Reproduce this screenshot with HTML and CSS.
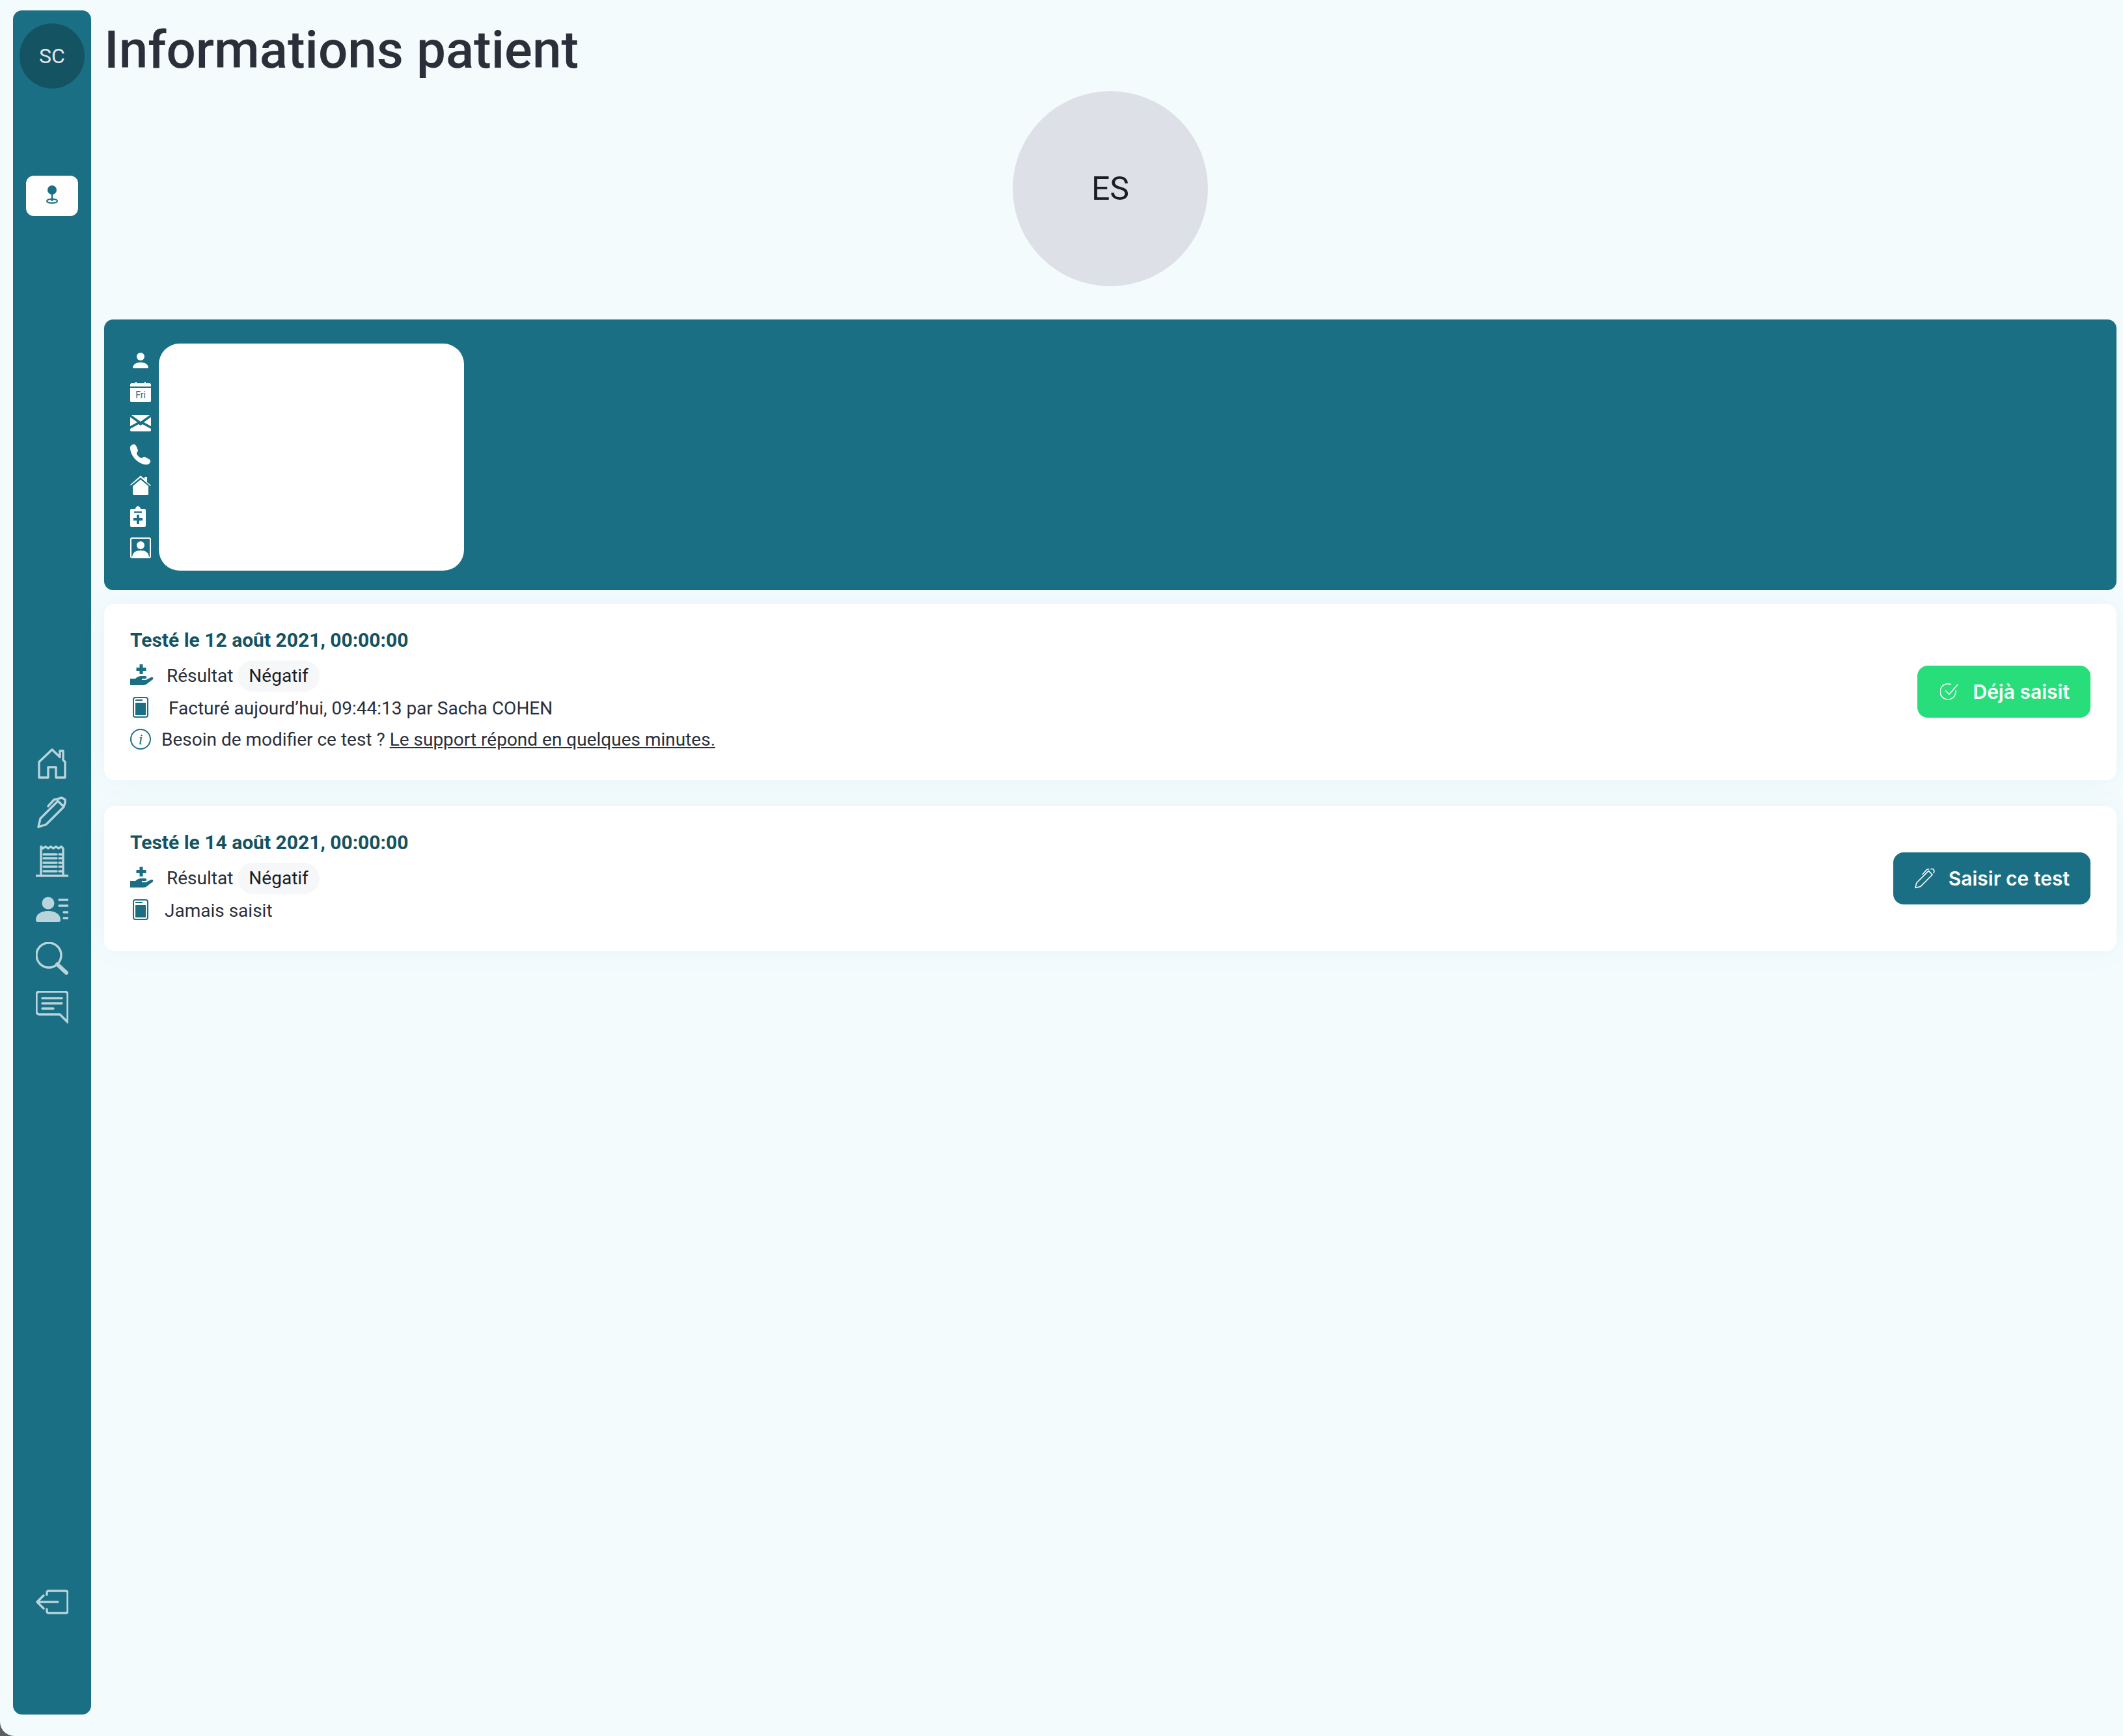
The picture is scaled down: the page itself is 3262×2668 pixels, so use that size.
FILE: index.html
```html
<!DOCTYPE html>
<html lang="fr">
  <head>
    <meta charset="UTF-8" />
    <title>Informations patient</title>
    <link rel="stylesheet" href="styles.css">
  </head>
  <body>
    <aside class="sidebar">
      <div class="user-avatar">SC</div>
      <a class="pin-btn">
        <svg width="20" height="30" viewBox="0 0 20 30"><circle cx="10" cy="8" r="7" fill="#1a6f84"/><path d="M10 14v11" stroke="#1a6f84" stroke-width="2.4"/><ellipse cx="10" cy="25" rx="8" ry="3" fill="none" stroke="#1a6f84" stroke-width="2"/></svg>
      </a>
      <nav class="side-nav">
        <svg class="nav-icon" viewBox="0 0 50 50"><path d="M5 47V23L25 4l12 11.500V6h5v14l3 3v24H31V31H19v16z"/></svg>
        <svg class="nav-icon" viewBox="0 0 50 50"><path d="M4 48l3-13L34 8l9 9-27 27zM19 16l9-10 6-1M36 4l4-1 5 3v5l-2 5"/></svg>
        <svg class="nav-icon" viewBox="0 0 50 50"><path d="M8 48V3l3 3 4-3 4 3 4-3 4 3 4-3 4 3 4-3 3 3v42M1 48h49M12 15h20M12 21h20M12 28h20M12 34h20M12 41h20M36 15h5M36 21h5M36 28h5M36 34h5M36 41h5"/></svg>
        <svg class="nav-icon" viewBox="0 0 50 42"><circle cx="19" cy="11" r="9.500" class="solid"/><path class="solid" d="M0 37c0-9 8-14 19-14s19 5 19 14c0 2-1 3-3 3H3c-2 0-3-1-3-3z"/><path d="M36 6h13M36 15h13M43 25h6M43 34h6"/></svg>
        <svg class="nav-icon" viewBox="0 0 50 50"><circle cx="20" cy="20" r="19"/><path d="M33 34l14 13" class="thick"/></svg>
        <svg class="nav-icon" viewBox="0 0 50 50"><path d="M5 1h40c2 0 4 2 4 4v43L37 36H5c-2 0-4-2-4-4V5c0-2 2-4 4-4zM10 11h30M10 19h30M10 27h17"/></svg>
      </nav>
      <a class="logout">
        <svg class="nav-icon" viewBox="0 0 50 38"><path d="M17 8V5c0-2 1-3 3-3h26c2 0 3 1 3 3v28c0 2-1 3-3 3H20c-2 0-3-1-3-3v-3M34 19H2M12 9L2 19l10 10"/></svg>
      </a>
    </aside>

    <main class="content">
      <h1>Informations patient</h1>
      <div class="patient-avatar">ES</div>

      <section class="patient-panel">
        <div class="info-icons">
          <svg width="34" height="32" viewBox="0 0 34 32"><circle cx="17" cy="10" r="6" fill="#fff"/><path d="M5 28c0-6 5-9 12-9s12 3 12 9z" fill="#fff"/></svg>
          <svg width="34" height="32" viewBox="0 0 34 32"><path d="M3 3h6V1h2v2h12V1h2v2h6c1 0 2 1 2 2v3H1V5c0-1 1-2 2-2zM1 10h32v20c0 1-1 2-2 2H3c-1 0-2-1-2-2z" fill="#fff"/><text x="17" y="26" class="cal-text">Fri</text></svg>
          <svg width="34" height="32" viewBox="0 0 34 32"><path d="M3 4h28l-14 10zM1 7l11 8L1 21zM33 7L22 15l11 6zM1 25l13-7 3 2 3-2 13 7v2c0 1-1 2-2 2H3c-1 0-2-1-2-2z" fill="#fff"/></svg>
          <svg width="34" height="32" viewBox="0 0 34 32"><path d="M1 6c0-3 3-5 6-5 2 0 3 2 4 4l2 5c0 2-2 3-2 5 1 3 4 6 7 7 2 0 3-2 5-2l6 3c2 1 4 3 3 5-1 3-4 4-6 4C14 32 1 19 1 6z" fill="#fff"/></svg>
          <svg width="34" height="32" viewBox="0 0 34 32"><path d="M1 15L17 1l6 5V3h4v8l6 5-1 1L17 4 2 16z" fill="#fff"/><path d="M5 17L17 7l12 10v12c0 1-1 2-2 2H7c-1 0-2-1-2-2z" fill="#fff"/></svg>
          <svg width="34" height="32" viewBox="0 0 34 32"><path fill-rule="evenodd" d="M3 4h6c0-2 2-4 4-4s4 2 4 4h6c1 0 2 1 2 2v24c0 1-1 2-2 2H3c-1 0-2-1-2-2V6c0-1 1-2 2-2zM7 8v2h12V8zM11 13v5H6v4h5v5h4v-5h5v-4h-5v-5z" fill="#fff"/></svg>
          <svg width="34" height="32" viewBox="0 0 34 32"><rect x="2" y="1" width="30" height="30" rx="2" fill="none" stroke="#fff" stroke-width="2"/><circle cx="17" cy="12" r="6" fill="#fff"/><path d="M4 31c0-8 6-11 13-11s13 3 13 11z" fill="#fff"/></svg>
        </div>
        <div class="map-box"></div>
      </section>

      <article class="test-card first">
        <div class="test-info">
          <h3>Testé le 12 août 2021, 00:00:00</h3>
          <div class="test-row result-row">
            <svg class="hand-icon" width="36" height="32" viewBox="0 0 36 32"><path d="M14.500 0h5v5h5v5h-5v5h-5v-5h-5V5h5zM0 22h8c3-3 6-4 9-4h6c3 0 3 4 0 4h-5v2h6l8-4c3-1 4 1 3 3l-8 6c-2 2-4 3-7 3H0z" fill="#1a6f84"/></svg>
            <span class="label">Résultat</span>
            <span class="chip">Négatif</span>
          </div>
          <div class="test-row billed-row">
            <svg class="doc-icon" width="24" height="32" viewBox="0 0 24 32"><rect x="1" y="1" width="22" height="30" rx="3" fill="none" stroke="#1a6f84" stroke-width="2"/><rect x="4" y="9" width="16" height="19" fill="#1a6f84"/><path d="M4 5h11" stroke="#1a6f84" stroke-width="2"/></svg>
            <span>Facturé aujourd’hui, 09:44:13 par Sacha COHEN</span>
          </div>
          <div class="test-row help-row">
            <svg class="info-icon" width="32" height="32" viewBox="0 0 32 32"><circle cx="16" cy="16" r="15" fill="none" stroke="#1a6f84" stroke-width="2"/><text x="16" y="24" class="info-i">i</text></svg>
            <span>Besoin de modifier ce test ? <a class="support-link">Le support répond en quelques minutes.</a></span>
          </div>
        </div>
        <button class="btn btn-done">
          <svg width="28" height="28" viewBox="0 0 28 28"><path d="M24 12v2a12 12 0 1 1-7-11" fill="none" stroke="#fff" stroke-width="1.600"/><path d="M8 12l6 6L27 3" fill="none" stroke="#fff" stroke-width="1.600"/></svg>
          Déjà saisit
        </button>
      </article>

      <article class="test-card">
        <div class="test-info">
          <h3>Testé le 14 août 2021, 00:00:00</h3>
          <div class="test-row result-row">
            <svg class="hand-icon" width="36" height="32" viewBox="0 0 36 32"><path d="M14.500 0h5v5h5v5h-5v5h-5v-5h-5V5h5zM0 22h8c3-3 6-4 9-4h6c3 0 3 4 0 4h-5v2h6l8-4c3-1 4 1 3 3l-8 6c-2 2-4 3-7 3H0z" fill="#1a6f84"/></svg>
            <span class="label">Résultat</span>
            <span class="chip">Négatif</span>
          </div>
          <div class="test-row billed-row never">
            <svg class="doc-icon" width="24" height="32" viewBox="0 0 24 32"><rect x="1" y="1" width="22" height="30" rx="3" fill="none" stroke="#1a6f84" stroke-width="2"/><rect x="4" y="9" width="16" height="19" fill="#1a6f84"/><path d="M4 5h11" stroke="#1a6f84" stroke-width="2"/></svg>
            <span>Jamais saisit</span>
          </div>
        </div>
        <button class="btn btn-enter">
          <svg width="31" height="32" viewBox="0 0 32 32"><path d="M1 31l2-8L22 4l6 6L9 29zM12 10l7-8 4-1M25 1l4 0 2 3-1 4" fill="none" stroke="#fff" stroke-width="1.600" stroke-linejoin="round"/></svg>
          Saisir ce test
        </button>
      </article>
    </main>
  </body>
</html>
```

FILE: styles.css
```css
html {
  background-color: #5b5f5f;
}
body {
  margin: 0;
  height: 2668px;
  box-sizing: border-box;
  display: flex;
  background-color: #f3fbfd;
  border-bottom-left-radius: 22px;
  font-family: Roboto, sans-serif;
  color: #2a2f3a;
  overflow: hidden;
}

/* sidebar */
.sidebar {
  flex: none;
  width: 120px;
  height: 2619px;
  margin: 16px 20px 0;
  background-color: #1a6f84;
  border-radius: 14px;
  display: flex;
  flex-direction: column;
  align-items: center;
}
.user-avatar {
  width: 100px;
  height: 100px;
  margin-top: 20px;
  border-radius: 50%;
  background-color: #145361;
  color: #e4e7eb;
  font-size: 32px;
  display: flex;
  align-items: center;
  justify-content: center;
}
.pin-btn {
  width: 80px;
  height: 62px;
  margin-top: 134px;
  background-color: #fff;
  border-radius: 12px;
  display: flex;
  align-items: center;
  justify-content: center;
}
.pin-btn svg {
  margin-bottom: 4px;
}
.side-nav {
  margin-top: 816px;
  display: flex;
  flex-direction: column;
  gap: 25px;
}
.nav-icon {
  display: block;
  width: 50px;
  height: 50px;
  fill: none;
  stroke: #bad4db;
  stroke-width: 3.4;
  stroke-linecap: round;
  stroke-linejoin: round;
}
.nav-icon .solid {
  fill: #bad4db;
  stroke: none;
}
.nav-icon .thick {
  stroke-width: 6;
}
.logout {
  margin-top: 864px;
}

/* main column */
.content {
  flex: 1;
  min-width: 0;
  padding-right: 10px;
}
h1 {
  margin: 33px 0 0;
  font-size: 80px;
  line-height: 88px;
  font-weight: 500;
  color: #2a2f3a;
}
.patient-avatar {
  width: 300px;
  height: 300px;
  margin: 19px auto 0;
  border-radius: 50%;
  background-color: #dde1e7;
  color: #1a1d24;
  font-size: 50px;
  display: flex;
  align-items: center;
  justify-content: center;
}
.patient-panel {
  height: 416px;
  margin-top: 51px;
  box-sizing: border-box;
  padding: 37px 0 0 39px;
  background-color: #1a6f84;
  border-radius: 14px;
  display: flex;
  gap: 11px;
}
.info-icons {
  display: flex;
  flex-direction: column;
  gap: 16px;
  padding-top: 10px;
}
.info-icons svg {
  display: block;
}
.cal-text {
  font-family: Roboto, sans-serif;
  font-size: 14px;
  text-anchor: middle;
  fill: #1a6f84;
}
.map-box {
  width: 469px;
  height: 349px;
  background-color: #fff;
  border-radius: 32px;
}

/* test cards */
.test-card {
  margin-top: 40px;
  padding: 36px 40px 38px 40px;
  background-color: #fff;
  border-radius: 16px;
  box-shadow: 0 0 40px rgba(26, 111, 132, 0.05);
  display: flex;
  align-items: center;
  justify-content: space-between;
}
.test-card.first {
  margin-top: 21px;
}
.test-info h3 {
  margin: 0 0 11px;
  font-size: 30px;
  line-height: 40px;
  font-weight: 700;
  color: #14535f;
}
.test-row {
  display: flex;
  align-items: center;
  font-size: 28px;
  line-height: 48px;
}
.billed-row {
  margin-top: 2px;
}
.hand-icon {
  margin-right: 20px;
  margin-bottom: 5px;
}
.chip {
  margin-left: 7px;
  padding: 0 17px;
  border-radius: 24px;
  background-color: #f6f7f9;
  color: #1a1d24;
}
.doc-icon {
  margin-left: 4px;
  margin-right: 31px;
  margin-bottom: 5px;
}
.never .doc-icon {
  margin-right: 25px;
}
.info-icon {
  margin-right: 16px;
  margin-bottom: 2px;
}
.info-i {
  font-family: "Liberation Serif", serif;
  font-style: italic;
  font-size: 24px;
  text-anchor: middle;
  fill: #1a6f84;
}
.support-link {
  text-decoration: underline;
}
.btn {
  height: 80px;
  border: none;
  border-radius: 16px;
  padding: 0 32px;
  display: flex;
  align-items: center;
  gap: 21px;
  font-family: Inter, sans-serif;
  font-size: 30px;
  font-weight: 600;
  color: #fff;
}
.btn-done {
  padding-left: 35px;
  gap: 22px;
  background-color: #28de7a;
}
.btn-enter {
  padding-left: 33px;
  background-color: #1a6f84;
}
```
